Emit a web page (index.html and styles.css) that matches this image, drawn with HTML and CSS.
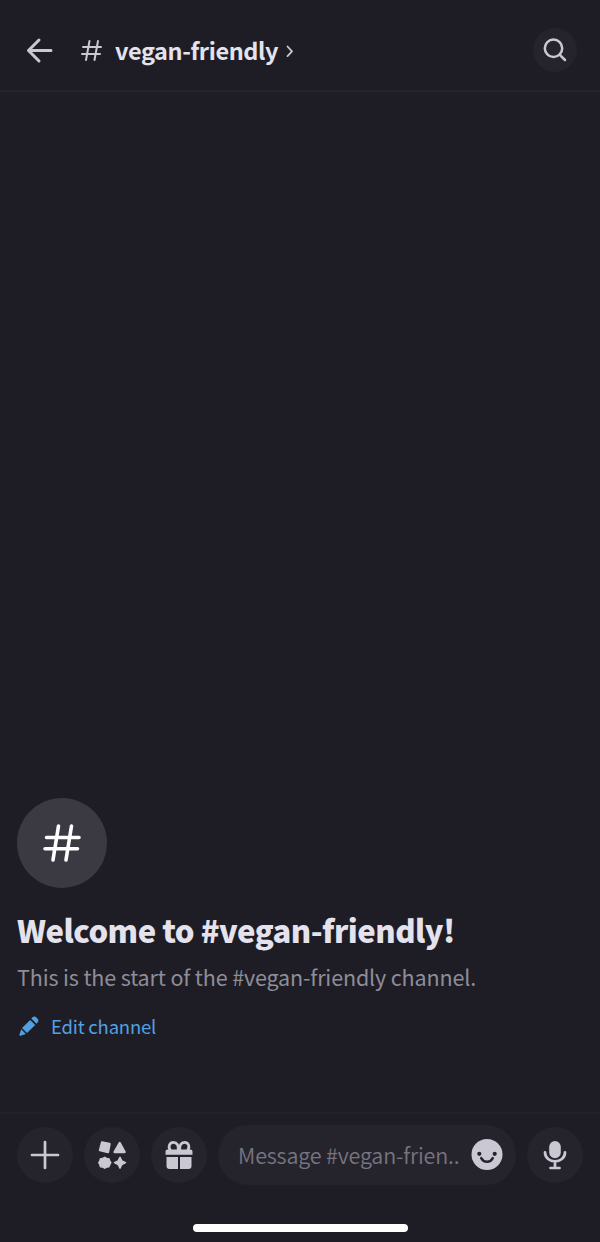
FILE: index.html
```html
<!DOCTYPE html>
<html lang="en">
<head>
    <meta charset="UTF-8">
    <meta name="viewport" content="width=device-width, initial-scale=1.0">
    <title>#vegan-friendly</title>
    <link rel="stylesheet" href="styles.css">
</head>
<body>

    <header class="topbar">
        <svg class="back" viewBox="0 0 28 28" width="28" height="28">
            <path d="M26 14.500H3.500M14 4L3.500 14.500 14 25"/>
        </svg>
        <svg class="hash" viewBox="0 0 22 22" width="22" height="22">
            <path d="M8.500 2L5 21M17 2L13.500 21M2 8h18M1 15h18"/>
        </svg>
        <h2 class="channel-name">vegan-friendly</h2>
        <svg class="chevron" viewBox="0 0 8 12" width="8" height="12">
            <path d="M1.500 1.500l4.500 4.800-4.500 4.800"/>
        </svg>
        <div class="search">
            <svg viewBox="0 0 24 24" width="24" height="24">
                <circle cx="10.500" cy="10.300" r="8.700"/>
                <path d="M16.800 16.800L22 22"/>
            </svg>
        </div>
    </header>

    <main class="messages">
        <div class="channel-icon">
            <svg viewBox="0 0 38 38" width="38" height="38">
                <path d="M15.500 2L10 36M28.500 2L23 36M3.500 13.500H36M2 24.800h32.500"/>
            </svg>
        </div>
        <h1>Welcome to #vegan-friendly!</h1>
        <p class="intro">This is the start of the #vegan-friendly channel.</p>
        <div class="edit">
            <svg viewBox="0 0 20 20" width="20" height="20">
                <path d="M12.300 2.600l5.100 5.100 1-1a2.900 2.900 0 0 0 0-4.100l-1-1a2.900 2.900 0 0 0-4.100 0z"/>
                <path d="M11.200 3.900l5 5-8.200 8.200-5-5z"/>
                <path d="M2.200 13.200l4.700 4.700-5.500 1.900a.8.8 0 0 1-1-1z"/>
            </svg>
            <span>Edit channel</span>
        </div>
    </main>

    <footer class="composer">
        <div class="round">
            <svg viewBox="0 0 30 30" width="30" height="30">
                <path class="line" d="M15 2v26M2 15h26"/>
            </svg>
        </div>
        <div class="round">
            <svg viewBox="0 0 30 30" width="30" height="30">
                <path class="joined" d="M5 2.500l7.500 1.500-1.500 8-8-1.800z"/>
                <path class="joined" d="M22.700 3L27.600 12h-10z"/>
                <path class="joined thin" d="M7.700 17.300l2 1.100 2.200.4.800 2 1.100 1.900-1.100 2-.8 2-2.200.4-2 1.100-2-1.100-2.200-.4-.6-2-1.100-2 1.100-1.900.6-2 2.200-.4z"/>
                <path class="joined thin" d="M23 17.300l1.800 3.600 3.700 1.800-3.700 1.800-1.800 3.600-1.800-3.600-3.700-1.800 3.700-1.800z"/>
            </svg>
        </div>
        <div class="round">
            <svg viewBox="0 0 30 30" width="30" height="30">
                <path class="bow" d="M6.300 10.500C3.500 6 6 2.300 9.500 2.300c3.300 0 5.500 3.200 4.700 8.200M23.700 10.500c2.800-4.500.3-8.200-3.200-8.200-3.300 0-5.500 3.200-4.700 8.200"/>
                <path d="M3.500 9.500h23a2 2 0 0 1 2 2v3.300h-27v-3.300a2 2 0 0 1 2-2zM2.500 17H14v12H5.500a3 3 0 0 1-3-3zM16 17h11.500v9a3 3 0 0 1-3 3H16z"/>
            </svg>
        </div>
        <div class="message-box">
            <span>Message #vegan-frien..</span>
            <svg viewBox="0 0 32 32" width="32" height="32">
                <circle cx="16" cy="15.500" r="15.500"/>
                <circle class="eye" cx="8.300" cy="14.800" r="2.100"/>
                <circle class="eye" cx="23.700" cy="14.800" r="2.100"/>
                <path class="smile" d="M10.300 19.200c2.300 4.700 9.100 4.700 11.400 0"/>
            </svg>
        </div>
        <div class="round">
            <svg viewBox="0 0 30 30" width="30" height="30">
                <rect x="9.200" y="1" width="11.600" height="17.300" rx="5.800"/>
                <path class="line" d="M5 12.300c0 12 20 12 20 0M15 21.500V28M10.500 28h9"/>
            </svg>
        </div>
    </footer>

    <div class="home-indicator"></div>

</body>
</html>
```
FILE: styles.css
```css
body {
    font-family: "Noto Sans CJK SC", "Noto Sans", sans-serif;
    background: #1e1d26;
    color: #e4e2ec;
    margin: 0;
    height: 1242px;
    display: flex;
    flex-direction: column;
    overflow: hidden;
}

svg {
    display: block;
    flex-shrink: 0;
    overflow: visible;
}

.topbar {
    height: 92px;
    padding: 10px 23px 0 25px;
    border-bottom: 2px solid #25242d;
    box-sizing: border-box;
    display: flex;
    align-items: center;
}

.topbar path,
.topbar circle {
    fill: none;
    stroke: #cac8d2;
    stroke-width: 2.5;
    stroke-linecap: round;
    stroke-linejoin: round;
}

.topbar .back path {
    stroke-width: 3;
}

.topbar .hash path {
    stroke-width: 2;
}

.hash {
    margin-left: 28px;
}

.channel-name {
    font-size: 23.5px;
    line-height: 36px;
    font-weight: 700;
    letter-spacing: -0.4px;
    margin: 0 0 0 12px;
    white-space: nowrap;
}

.topbar .chevron path {
    stroke-width: 1.8;
}

.chevron {
    margin: 2px 0 0 8px;
}

.search {
    width: 44px;
    height: 44px;
    margin-left: auto;
    border-radius: 50%;
    background: #25242d;
    display: flex;
    align-items: center;
    justify-content: center;
}

.messages {
    flex: 1;
    padding: 0 17px 72px;
    display: flex;
    flex-direction: column;
    justify-content: flex-end;
}

.channel-icon {
    width: 90px;
    height: 90px;
    border-radius: 50%;
    background: #3b3a43;
    display: flex;
    align-items: center;
    justify-content: center;
}

.channel-icon path {
    stroke: #fff;
    stroke-width: 3.6;
    stroke-linecap: round;
}

h1 {
    font-size: 31px;
    line-height: 40px;
    font-weight: 900;
    letter-spacing: -0.5px;
    margin: 22px 0 0;
    white-space: nowrap;
}

.intro {
    font-size: 21.5px;
    line-height: 30px;
    letter-spacing: -0.14px;
    color: #8f8d98;
    margin: 12px 0 0;
    white-space: nowrap;
}

.edit {
    height: 28px;
    margin-top: 20px;
    padding-left: 2px;
    display: flex;
    align-items: center;
    gap: 12px;
    font-size: 18.5px;
    line-height: 28px;
    letter-spacing: -0.2px;
    color: #53a0e0;
}

.edit path {
    fill: #53a0e0;
}

.composer {
    height: 84px;
    padding: 0 17px;
    border-top: 2px solid #23222b;
    box-sizing: border-box;
    display: flex;
    align-items: center;
    gap: 11px;
}

.round {
    width: 56px;
    height: 56px;
    flex-shrink: 0;
    border-radius: 50%;
    background: #25242d;
    display: flex;
    align-items: center;
    justify-content: center;
}

.composer svg {
    fill: #cac8d2;
}

.composer .line,
.composer .bow {
    fill: none;
    stroke: #cac8d2;
    stroke-width: 2.7;
    stroke-linecap: round;
}

.composer .joined {
    stroke: #cac8d2;
    stroke-width: 2.4;
    stroke-linejoin: round;
}

.composer .thin {
    stroke-width: 1.5;
}

.message-box {
    flex: 1;
    height: 60px;
    min-width: 0;
    padding: 0 13px 0 20px;
    box-sizing: border-box;
    border-radius: 30px;
    background: #25242d;
    color: #777580;
    font-size: 21.5px;
    font-weight: 350;
    line-height: 30px;
    letter-spacing: -0.15px;
    white-space: nowrap;
    display: flex;
    align-items: center;
    justify-content: space-between;
}

.message-box .eye {
    fill: #25242d;
}

.message-box .smile {
    fill: none;
    stroke: #25242d;
    stroke-width: 2.6;
    stroke-linecap: round;
}

.home-indicator {
    width: 215px;
    height: 8px;
    margin: 28px auto 10px;
    border-radius: 4px;
    background: #fff;
}
```
